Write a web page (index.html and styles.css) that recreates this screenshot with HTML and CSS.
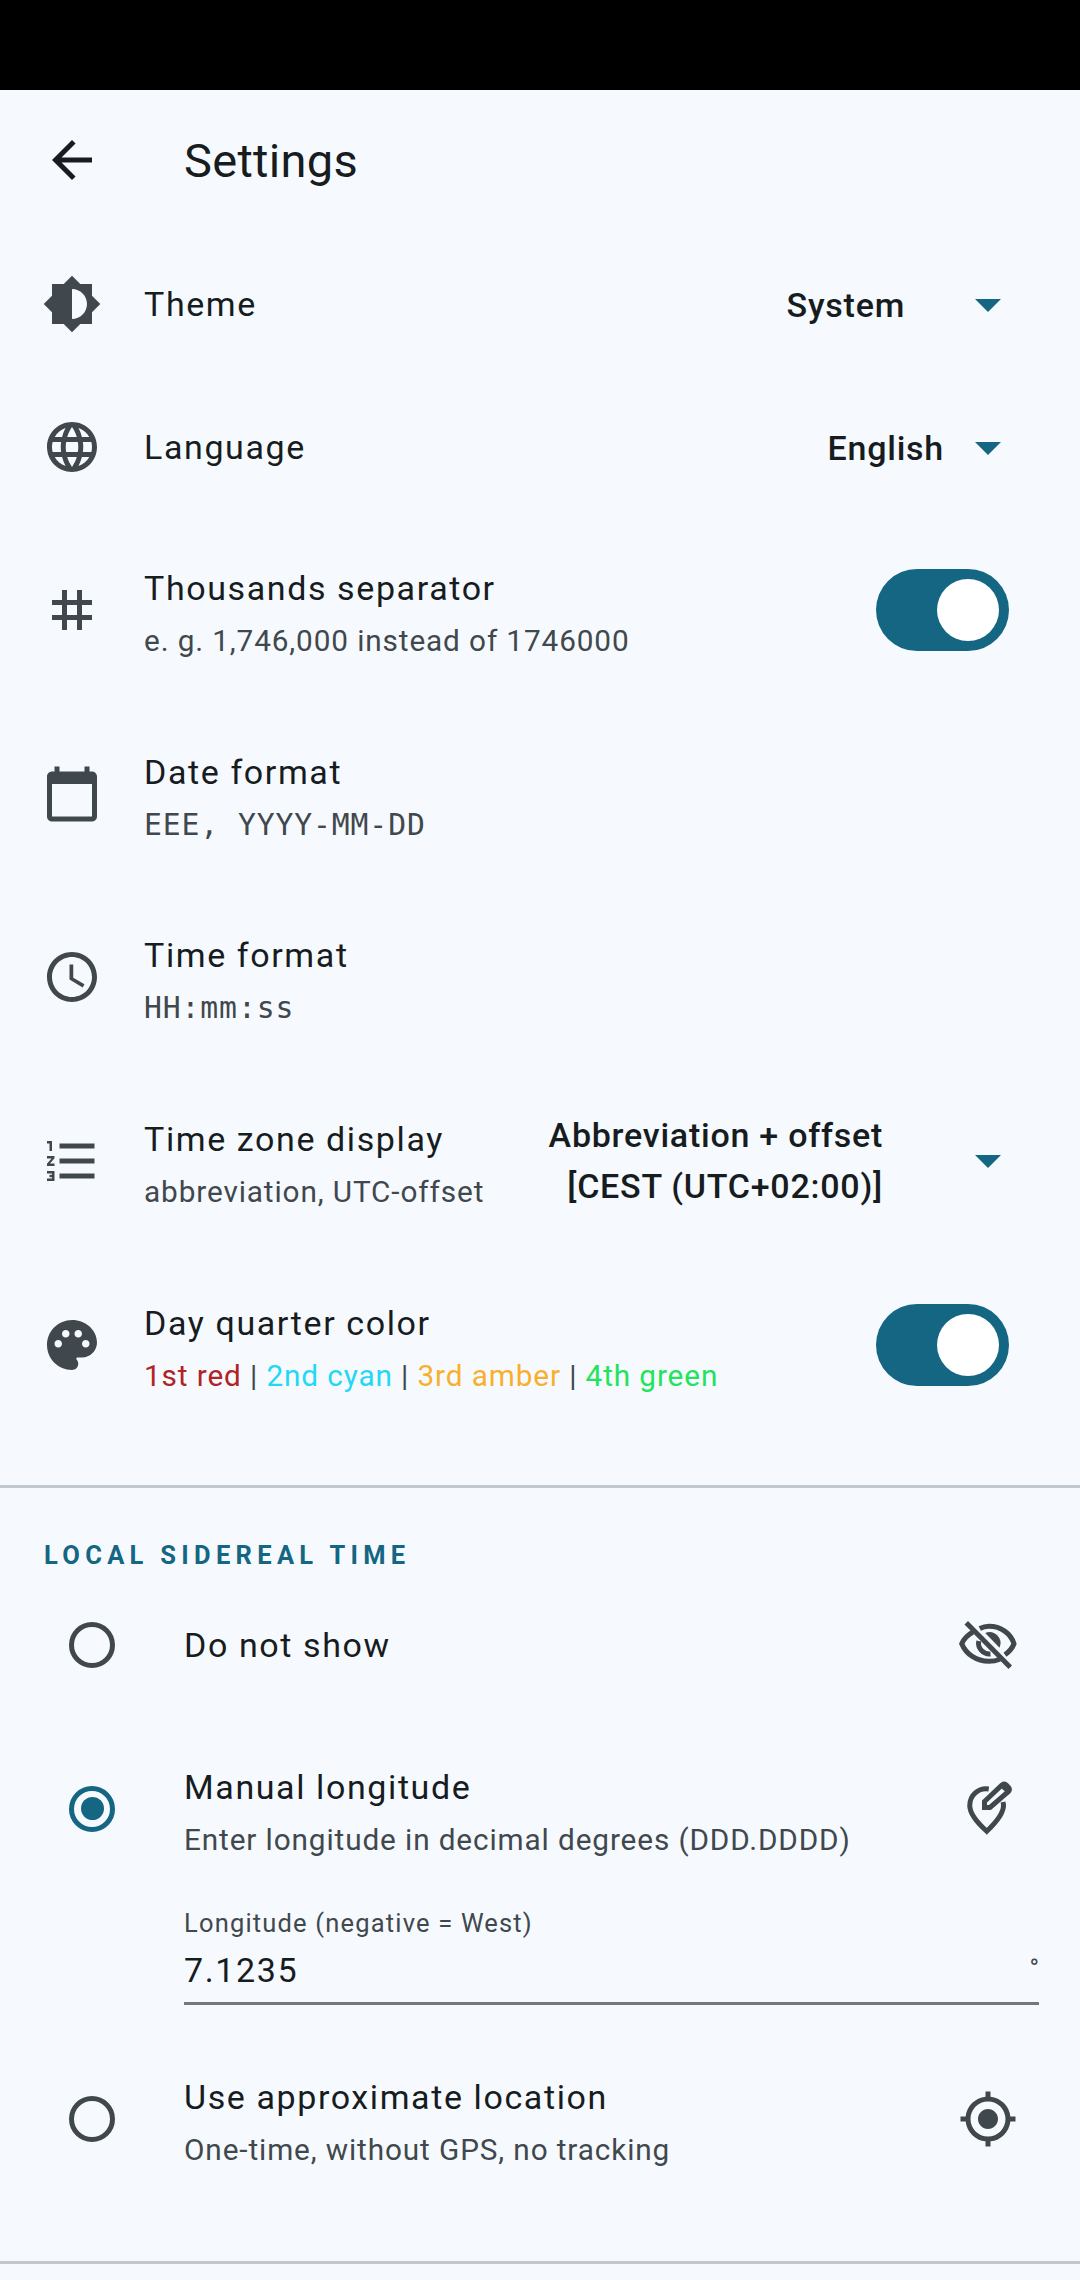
FILE: index.html
```html
<!DOCTYPE html>
<html>
<head>
    <title>Settings</title>
    <link rel="stylesheet" href="styles.css">
</head>
<body>

<div class="statusBar"></div>

<div class="appBar">
    <svg class="appBarIcon" viewBox="0 0 24 24"><path d="M20 11H7.83l5.59-5.59L12 4l-8 8 8 8 1.41-1.41L7.83 13H20v-2z"/></svg>
    <div class="appBarTitle">Settings</div>
</div>

<!-- General settings -->
<div class="settingsList">
    <div class="row rowShort">
        <svg class="rowIcon" viewBox="0 0 24 24"><path d="M20 15.31L23.31 12 20 8.69V4h-4.69L12 .69 8.69 4H4v4.69L.69 12 4 15.31V20h4.69L12 23.31 15.31 20H20v-4.69zM12 18V6c3.31 0 6 2.69 6 6s-2.69 6-6 6z"/></svg>
        <div class="rowText"><div class="rowTitle">Theme</div></div>
        <div class="dropdown dropdownSystem">
            <span class="dropdownValue">System</span>
            <span class="dropdownArrow"></span>
        </div>
    </div>

    <div class="row rowShort">
        <svg class="rowIcon" viewBox="0 0 24 24"><path d="M11.99 2C6.47 2 2 6.48 2 12s4.47 10 9.99 10C17.52 22 22 17.52 22 12S17.52 2 11.99 2zm6.93 6h-2.95c-.32-1.25-.78-2.45-1.38-3.56 1.84.63 3.37 1.91 4.33 3.56zM12 4.04c.83 1.2 1.48 2.53 1.91 3.96h-3.82c.43-1.43 1.08-2.76 1.91-3.96zM4.26 14C4.1 13.36 4 12.69 4 12s.1-1.36.26-2h3.38c-.08.66-.14 1.32-.14 2 0 .68.06 1.34.14 2H4.26zm.82 2h2.95c.32 1.25.78 2.45 1.38 3.56-1.84-.63-3.37-1.9-4.33-3.56zm2.95-8H5.08c.96-1.66 2.49-2.93 4.33-3.56C8.81 5.55 8.35 6.75 8.03 8zM12 19.96c-.83-1.2-1.48-2.53-1.91-3.96h3.82c-.43 1.43-1.08 2.76-1.91 3.96zM14.34 14H9.66c-.09-.66-.16-1.32-.16-2 0-.68.07-1.35.16-2h4.68c.09.65.16 1.32.16 2 0 .68-.07 1.34-.16 2zm.25 5.56c.6-1.11 1.06-2.31 1.38-3.56h2.95c-.96 1.65-2.49 2.93-4.33 3.56zM16.36 14c.08-.66.14-1.32.14-2 0-.68-.06-1.34-.14-2h3.38c.16.64.26 1.31.26 2s-.1 1.36-.26 2h-3.38z"/></svg>
        <div class="rowText"><div class="rowTitle">Language</div></div>
        <div class="dropdown dropdownEnglish">
            <span class="dropdownValue">English</span>
            <span class="dropdownArrow"></span>
        </div>
    </div>

    <div class="row">
        <svg class="rowIcon" viewBox="0 0 24 24"><path d="M20 10V8h-4V4h-2v4h-4V4H8v4H4v2h4v4H4v2h4v4h2v-4h4v4h2v-4h4v-2h-4v-4h4zm-6 4h-4v-4h4v4z"/></svg>
        <div class="rowText">
            <div class="rowTitle">Thousands separator</div>
            <div class="rowSub">e. g. 1,746,000 instead of 1746000</div>
        </div>
        <div class="toggle"><div class="toggleThumb"></div></div>
    </div>

    <div class="row">
        <svg class="rowIcon" viewBox="0 0 24 24"><path d="M20 3h-1V1h-2v2H7V1H5v2H4c-1.1 0-2 .9-2 2v16c0 1.1.9 2 2 2h16c1.1 0 2-.9 2-2V5c0-1.1-.9-2-2-2zm0 18H4V8h16v13z"/></svg>
        <div class="rowText">
            <div class="rowTitle">Date format</div>
            <div class="rowSub rowMono">EEE, YYYY-MM-DD</div>
        </div>
    </div>

    <div class="row">
        <svg class="rowIcon" viewBox="0 0 24 24"><path d="M11.99 2C6.47 2 2 6.48 2 12s4.47 10 9.99 10C17.52 22 22 17.52 22 12S17.52 2 11.99 2zM12 20c-4.42 0-8-3.58-8-8s3.58-8 8-8 8 3.58 8 8-3.58 8-8 8zm.5-13H11v6l5.25 3.15.75-1.23-4.5-2.67z"/></svg>
        <div class="rowText">
            <div class="rowTitle">Time format</div>
            <div class="rowSub rowMono">HH:mm:ss</div>
        </div>
    </div>

    <div class="row">
        <svg class="rowIcon" viewBox="0 0 24 24"><path d="M2 17h2v.5H3v1h1v.5H2v1h3v-4H2v1zm1-9h1V4H2v1h1v3zm-1 3h1.8L2 13.1v.9h3v-1H3.2L5 10.9V10H2v1zm5-6v2h14V5H7zm0 14h14v-2H7v2zm0-6h14v-2H7v2z"/></svg>
        <div class="rowText">
            <div class="rowTitle">Time zone display</div>
            <div class="rowSub">abbreviation, UTC-offset</div>
        </div>
        <div class="dropdown dropdownZone">
            <span class="dropdownValue">Abbreviation + offset<br>[CEST (UTC+02:00)]</span>
            <span class="dropdownArrow"></span>
        </div>
    </div>

    <div class="row">
        <svg class="rowIcon" viewBox="0 0 24 24"><path d="M12 2C6.49 2 2 6.49 2 12s4.49 10 10 10c1.38 0 2.5-1.12 2.5-2.5 0-.61-.23-1.2-.64-1.67-.08-.1-.13-.21-.13-.33 0-.28.22-.5.5-.5H16c3.31 0 6-2.69 6-6 0-4.96-4.49-9-10-9zM6.5 13c-.83 0-1.5-.67-1.5-1.5S5.67 10 6.5 10s1.5.67 1.5 1.5S7.33 13 6.5 13zm3-4C8.67 9 8 8.33 8 7.5S8.67 6 9.5 6s1.5.67 1.5 1.5S10.33 9 9.5 9zm5 0c-.83 0-1.5-.67-1.5-1.5S13.67 6 14.5 6s1.5.67 1.5 1.5S15.33 9 14.5 9zm3 4c-.83 0-1.5-.67-1.5-1.5s.67-1.5 1.5-1.5 1.5.67 1.5 1.5-.67 1.5-1.5 1.5z"/></svg>
        <div class="rowText">
            <div class="rowTitle">Day quarter color</div>
            <div class="rowSub"><span class="quarterRed">1st red</span> | <span class="quarterCyan">2nd cyan</span> | <span class="quarterAmber">3rd amber</span> | <span class="quarterGreen">4th green</span></div>
        </div>
        <div class="toggle"><div class="toggleThumb"></div></div>
    </div>
</div>

<div class="divider dividerTop"></div>

<!-- Local sidereal time -->
<div class="sectionLabel">LOCAL SIDEREAL TIME</div>

<div class="radioRow radioRowShort">
    <div class="radioBox"><div class="radio"></div></div>
    <div class="rowText"><div class="rowTitle">Do not show</div></div>
    <svg class="rowIcon" viewBox="0 0 24 24">
        <g transform="translate(.4 0)">
            <path class="iconLine" d="M8.3 5.4C9.5 4.8 10.7 4.5 12 4.5c4.7 0 8.7 2.9 10 7-.6 1.6-1.9 3.2-3.6 4.4"/>
            <path class="iconLine" d="M5.6 6.8C3.4 8 1.9 9.6 1.1 11.5c1.7 4.2 5.9 7 10.9 7 1.6 0 3.1-.3 4.4-.8"/>
            <path d="M10.5 7.2a4.4 4.4 0 0 1 5.7 5.9z"/>
            <path class="iconLine" d="M7.9 10.4a4.4 4.4 0 0 0 4.7 5.2"/>
            <path class="iconLine" d="M2.9 3.1l17.6 17.8"/>
        </g>
    </svg>
</div>

<div class="radioRow">
    <div class="radioBox"><div class="radio radioOn"><div class="radioDot"></div></div></div>
    <div class="rowText">
        <div class="rowTitle">Manual longitude</div>
        <div class="rowSub">Enter longitude in decimal degrees (DDD.DDDD)</div>
    </div>
    <svg class="rowIcon" viewBox="0 0 24 24">
        <g transform="translate(-.4 0)">
            <path class="iconLine" d="M12.7 4C8.5 3.4 5.1 6.5 5.1 10.6c0 3.2 2.9 6.8 6.8 10.3 3.7-3.5 6.7-6.9 6.7-10.3 0-.6-.1-1-.2-1.4"/>
            <path class="iconLine" d="M11 11.4V9l7-6.6q1-.7 1.8.1l.8.9q.7.8 0 1.6l-7.4 6.4z"/>
            <path d="M17 3l1.5-1 2.3 2.2-1.2 1.2z"/>
        </g>
    </svg>
</div>

<div class="fieldRow">
    <div class="fieldLabel">Longitude (negative = West)</div>
    <div class="fieldLine">
        <span class="fieldValue">7.1235</span>
        <span class="fieldSuffix">°</span>
    </div>
</div>

<div class="radioRow radioRowLast">
    <div class="radioBox"><div class="radio"></div></div>
    <div class="rowText">
        <div class="rowTitle">Use approximate location</div>
        <div class="rowSub">One-time, without GPS, no tracking</div>
    </div>
    <svg class="rowIcon" viewBox="0 0 24 24"><path d="M12 8c-2.21 0-4 1.79-4 4s1.79 4 4 4 4-1.79 4-4-1.79-4-4-4zm8.94 3A8.994 8.994 0 0 0 13 3.06V1h-2v2.06A8.994 8.994 0 0 0 3.06 11H1v2h2.06A8.994 8.994 0 0 0 11 20.94V23h2v-2.06A8.994 8.994 0 0 0 20.94 13H23v-2h-2.06zM12 19c-3.87 0-7-3.13-7-7s3.13-7 7-7 7 3.13 7 7-3.13 7-7 7z"/></svg>
</div>

<div class="divider"></div>

</body>
</html>
```
FILE: styles.css
```css
/* General Styles */
body {
    margin: 0;
    font-family: Roboto, sans-serif;
    background-color: #f6fafe;
    color: #171c1f;
}

svg {
    fill: #41484d;
    flex-shrink: 0;
}

.iconLine {
    fill: none;
    stroke: #41484d;
    stroke-width: 2;
}

.statusBar {
    height: 90px;
    background-color: #000;
}

/* App Bar */
.appBar {
    display: flex;
    align-items: center;
    height: 140px;
    padding-left: 42px;
    gap: 82px;
}

.appBarIcon {
    width: 60px;
    height: 60px;
    fill: #171c1f;
}

.appBarTitle {
    font-size: 47px;
    letter-spacing: 0.3px;
}

/* Setting Rows */
.settingsList {
    padding-top: 2px;
}

.row {
    display: flex;
    align-items: center;
    height: 183.8px;
    padding: 0 71px 0 42px;
}

.rowShort {
    height: 143px;
}

.rowShort .dropdown {
    padding-top: 3px;
}

.rowIcon {
    width: 60px;
    height: 60px;
}

.rowText {
    flex: 1;
    padding-left: 42px;
}

.rowTitle {
    font-size: 34px;
    letter-spacing: 1.6px;
    line-height: 50px;
}

/* the negative margin sits the two lines a little below the row's centre */
.rowSub {
    font-size: 29.75px;
    letter-spacing: 0.88px;
    line-height: 50px;
    margin-top: 3px;
    margin-bottom: -9px;
    color: #41484d;
}

.rowMono {
    font-family: "DejaVu Sans Mono", monospace;
    font-size: 29.75px;
    letter-spacing: 0.87px;
}

.quarterRed { color: #b02424; }
.quarterCyan { color: #22d8f5; }
.quarterAmber { color: #f8b02c; }
.quarterGreen { color: #22e35c; }

/* Dropdowns */
.dropdown {
    display: flex;
    align-items: center;
    margin-right: -9px;
}

.dropdownValue {
    font-size: 34px;
    font-weight: 500;
    letter-spacing: 0.75px;
    line-height: 51px;
    text-align: right;
}

.dropdownSystem .dropdownValue {
    margin-right: 70px;
}

.dropdownEnglish .dropdownValue {
    margin-right: 31px;
}

.dropdownZone .dropdownValue {
    margin-right: 92px;
}

.dropdownArrow {
    width: 0;
    height: 0;
    margin-right: 17px;
    border-left: 13px solid transparent;
    border-right: 13px solid transparent;
    border-top: 13px solid #146682;
}

/* Toggle */
.toggle {
    display: flex;
    align-items: center;
    justify-content: flex-end;
    width: 133px;
    height: 82px;
    padding-right: 10px;
    box-sizing: border-box;
    border-radius: 41px;
    background-color: #146682;
}

.toggleThumb {
    width: 62px;
    height: 62px;
    border-radius: 50%;
    background-color: #fff;
}

/* Dividers */
.divider {
    height: 3px;
    background-color: #c1c7ce;
}

.dividerTop {
    margin-top: 48.5px;
}

/* Local Sidereal Time */
.sectionLabel {
    padding: 50px 0 1.5px 44px;
    font-size: 25.5px;
    font-weight: 700;
    letter-spacing: 5.3px;
    line-height: 34px;
    color: #146682;
}

.radioRow {
    display: flex;
    align-items: center;
    height: 184px;
    padding: 0 62px;
}

.radioRow .rowText {
    padding-left: 62px;
}

.radioRowShort {
    height: 143px;
}

.radioRowLast {
    margin-bottom: 50px;
}

.radioBox {
    display: flex;
    align-items: center;
    justify-content: center;
    width: 60px;
    height: 60px;
}

.radio {
    display: flex;
    align-items: center;
    justify-content: center;
    width: 46px;
    height: 46px;
    box-sizing: border-box;
    border: 5px solid #41484d;
    border-radius: 50%;
}

.radioOn {
    border-color: #146682;
}

.radioDot {
    width: 23px;
    height: 23px;
    border-radius: 50%;
    background-color: #146682;
}

/* Longitude Field */
.fieldRow {
    margin-top: 5px;
    margin-bottom: 22px;
    padding: 0 41px 0 184px;
}

.fieldLabel {
    font-size: 25.5px;
    letter-spacing: 1.18px;
    line-height: 34px;
    color: #41484d;
}

.fieldLine {
    display: flex;
    justify-content: space-between;
    height: 62px;
    border-bottom: 3px solid #72787e;
}

.fieldValue {
    font-size: 34px;
    letter-spacing: 1.6px;
    line-height: 60px;
}

.fieldSuffix {
    padding-top: 11px;
    font-size: 25.5px;
    line-height: 34px;
    color: #41484d;
}
```
